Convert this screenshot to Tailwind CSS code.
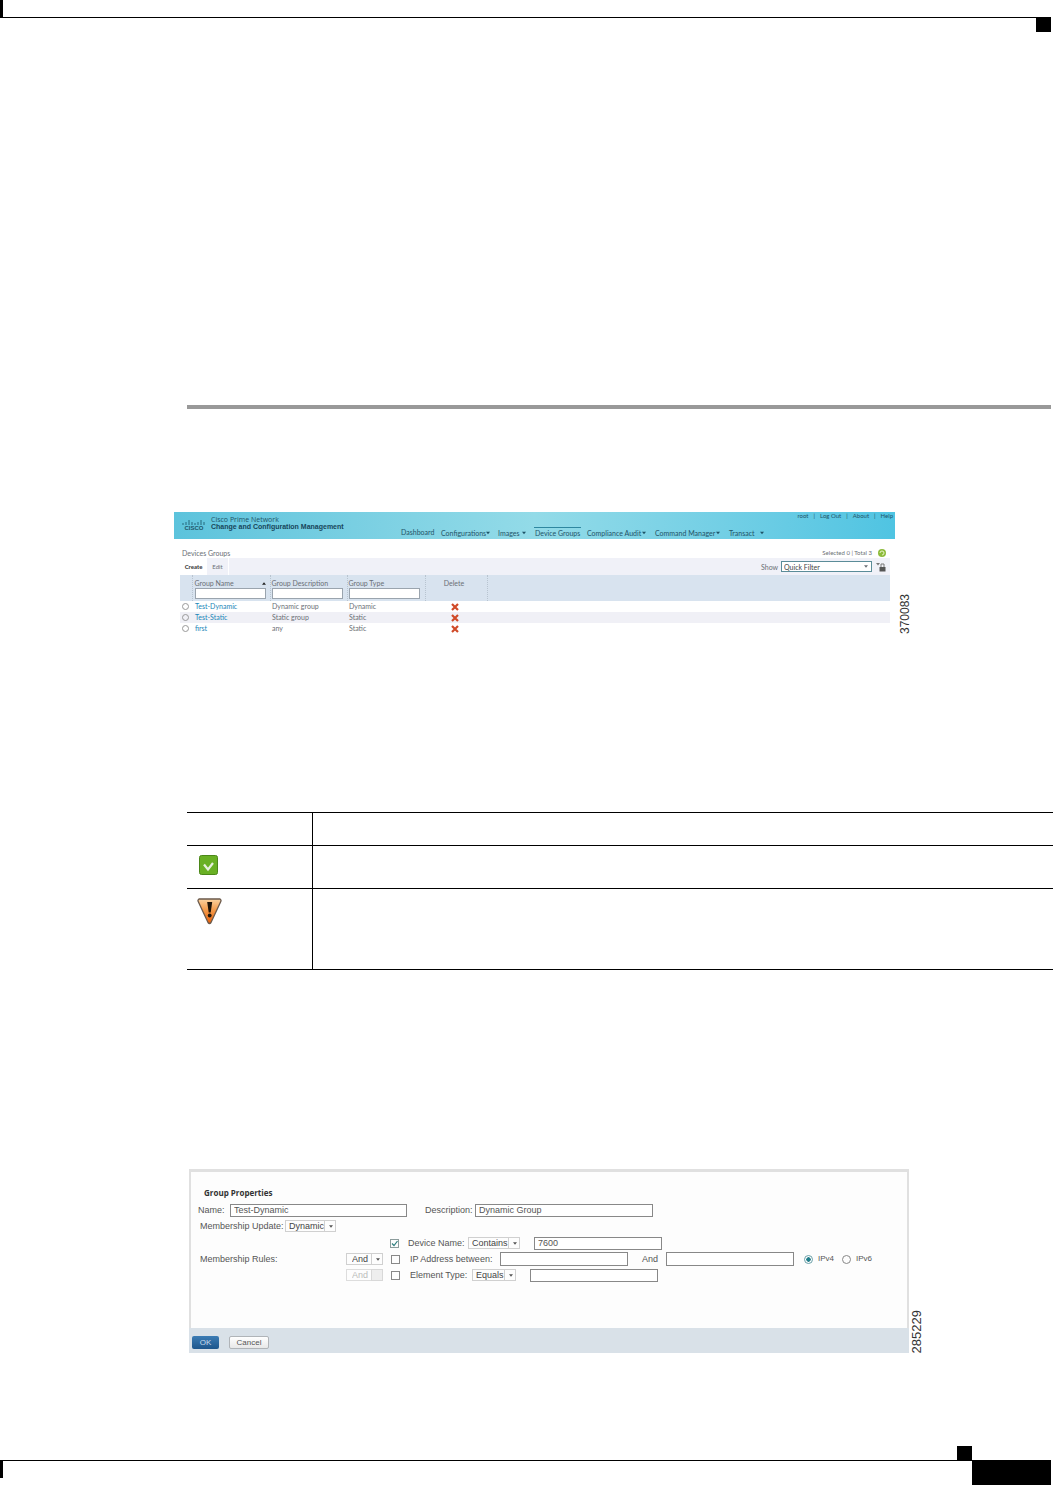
<!DOCTYPE html>
<html lang="en">
<head>
<meta charset="utf-8">
<title>Device Groups</title>
<script src="https://cdn.jsdelivr.net/npm/@tailwindcss/browser@4"></script>
</head>
<body class="bg-white font-['Liberation_Sans',sans-serif]">
<svg class="hidden">
  <symbol id="caret" viewBox="0 0 6 4"><path d="M0 0h6L3 4z" fill="currentColor"/></symbol>
  <symbol id="cross" viewBox="0 0 8 8"><path d="M1 1l6 6M7 1L1 7" stroke="#d04a28" stroke-width="2.2" fill="none"/></symbol>
</svg>
<div class="flex min-h-screen flex-col">
  <header class="mr-0.5 flex h-8 flex-col">
    <div class="h-[17px] w-[3px] bg-black"></div>
    <div class="h-px bg-black"></div>
    <div class="h-3.5 w-[15px] self-end bg-black"></div>
  </header>

  <main class="flex flex-1 flex-col">
    <hr class="mt-[373px] mr-0.5 ml-[187px] h-1 border-0 bg-[#999999]">

    <figure class="mt-[103px] ml-[174px] flex items-end gap-1">
      <div class="w-full max-w-[721px] font-['Lato',sans-serif] text-[7px] leading-[10px] text-[#6b6f76]">
        <div class="flex h-[27px] justify-between bg-linear-to-r from-[#5cc3dc] via-[#93dbe8] to-[#4fc4e2] text-[#1f5468]">
          <div class="flex gap-[5px] pt-1 pl-2">
            <div class="flex w-6 flex-col items-center pt-1">
              <svg class="h-[5px] w-6" viewBox="0 0 24 5" fill="none" stroke="#24687c"><path d="M1 3v2M4 2v3M7 0v5M10 2v3M13 3v2M16 2v3M19 0v5M22 2v3"/></svg>
              <span class="font-['Liberation_Sans',sans-serif] text-[6px] leading-[6px] font-bold">CISCO</span>
            </div>
            <div class="leading-[8px]">
              <div class="font-['Open_Sans',sans-serif] leading-[7px]">Cisco Prime Network</div>
              <h1 class="font-['Liberation_Sans',sans-serif] font-bold text-[#17465a]">Change and Configuration Management</h1>
            </div>
          </div>
          <div class="flex flex-col justify-between">
            <div class="flex justify-end gap-[5px] pr-0.5 text-[6px] leading-[8px]">
              <a href="#">root</a><span>|</span><a href="#">Log Out</a><span>|</span><a href="#">About</a><span>|</span><a href="#">Help</a>
            </div>
            <nav class="flex pb-px whitespace-nowrap">
              <a href="#" class="w-10">Dashboard</a>
              <a href="#" class="flex w-[57px] items-center justify-between pr-[9px]">Configurations<svg class="h-1 w-1 shrink-0"><use href="#caret"/></svg></a>
              <a href="#" class="flex w-[36px] items-center justify-between pr-2">Images<svg class="h-1 w-1 shrink-0"><use href="#caret"/></svg></a>
              <a href="#" class="mr-1.5 w-[47px] border-t border-[#2e87a0] pl-px">Device Groups</a>
              <a href="#" class="flex w-[68px] items-center justify-between pr-[9px]">Compliance Audit<svg class="h-1 w-1 shrink-0"><use href="#caret"/></svg></a>
              <a href="#" class="flex w-[74px] items-center justify-between pr-[9px]">Command Manager<svg class="h-1 w-1 shrink-0"><use href="#caret"/></svg></a>
              <a href="#" class="mr-[131px] flex w-[35px] items-center justify-between">Transact<svg class="h-1 w-1 shrink-0"><use href="#caret"/></svg></a>
            </nav>
          </div>
        </div>

        <div class="mr-[5px] ml-1.5">
          <div class="flex h-[19px] items-end justify-between pl-0.5">
            <h2 class="text-[7px]">Devices Groups</h2>
            <div class="flex items-center gap-1.5 pr-1 text-[6px]">
              <span>Selected 0 | Total 3</span>
              <svg class="h-2 w-2" viewBox="0 0 8 8"><circle cx="4" cy="4" r="4" fill="#8dbb3c"/><path d="M2 4a2 2 0 1 1 2 2" fill="none" stroke="#e8f4c8"/></svg>
            </div>
          </div>
          <div class="flex h-[17px] items-center bg-[#f0f1f8]">
            <button class="h-full w-[27px] bg-white text-[6px] font-bold text-[#333333]">Create</button>
            <button class="h-full w-[22px] border-r border-white text-[6px]">Edit</button>
            <label for="show" class="ml-auto w-5">Show</label>
            <div class="relative">
              <select id="show" class="h-[11px] w-[91px] appearance-none border border-[#5b8c98] bg-white pl-0.5 text-[7px] leading-[8px] text-[#444444]"><option>Quick Filter</option></select>
              <svg class="absolute top-1 right-1 h-[3px] w-1"><use href="#caret"/></svg>
            </div>
            <svg class="mx-1 h-2.5 w-2.5" viewBox="0 0 10 10"><path d="M0 1h4L2 3.500z" fill="#777777"/><path d="M5 5V2h3v3" fill="none" stroke="#777777"/><path d="M3.500 5h6v4.500h-6z" fill="#555555"/></svg>
          </div>
          <table class="w-full table-fixed text-left">
            <colgroup><col class="w-3"><col class="w-[78px]"><col class="w-[77px]"><col class="w-[78px]"><col class="w-[62px]"><col></colgroup>
            <thead class="bg-[#d8e3ef] align-top leading-[8px]">
              <tr class="h-[26px]">
                <th class="border-r border-dotted border-[#b8c4d0]"></th>
                <th class="border-r border-dotted border-[#b8c4d0] pt-1 pl-0.5 font-normal"><div class="flex items-center justify-between pr-1"><label for="fn">Group Name</label><svg class="h-[3px] w-1 rotate-180 text-[#222222]"><use href="#caret"/></svg></div><input id="fn" class="mt-px block h-[11px] w-[71px] border border-[#9aa4ae] bg-white"></th>
                <th class="border-r border-dotted border-[#b8c4d0] pt-1 pl-px font-normal"><label class="block" for="fd">Group Description</label><input id="fd" class="mt-px block h-[11px] w-[71px] border border-[#9aa4ae] bg-white"></th>
                <th class="border-r border-dotted border-[#b8c4d0] pt-1 pl-px font-normal"><label class="block" for="ft">Group Type</label><input id="ft" class="mt-px block h-[11px] w-[71px] border border-[#9aa4ae] bg-white"></th>
                <th class="border-r border-dotted border-[#b8c4d0] pt-1 pr-1 text-center font-normal">Delete</th>
                <th></th>
              </tr>
            </thead>
            <tbody class="leading-[9px]">
              <tr class="h-[11px]">
                <td><input type="radio" name="row" aria-label="Test-Dynamic" class="ml-0.5 block size-[7px] appearance-none rounded-full border border-[#999999]"></td>
                <td class="pl-[3px]"><a href="#" class="text-[#1a86b8]">Test-Dynamic</a></td><td class="pl-0.5">Dynamic group</td><td class="pl-0.5">Dynamic</td>
                <td class="pr-0.5"><button aria-label="Delete" class="mx-auto block"><svg class="size-2"><use href="#cross"/></svg></button></td><td></td>
              </tr>
              <tr class="h-[11px] bg-[#f0f0f6]">
                <td><input type="radio" name="row" aria-label="Test-Static" class="ml-0.5 block size-[7px] appearance-none rounded-full border border-[#999999]"></td>
                <td class="pl-[3px]"><a href="#" class="text-[#1a86b8]">Test-Static</a></td><td class="pl-0.5">Static group</td><td class="pl-0.5">Static</td>
                <td class="pr-0.5"><button aria-label="Delete" class="mx-auto block"><svg class="size-2"><use href="#cross"/></svg></button></td><td></td>
              </tr>
              <tr class="h-[11px]">
                <td><input type="radio" name="row" aria-label="first" class="ml-0.5 block size-[7px] appearance-none rounded-full border border-[#999999]"></td>
                <td class="pl-[3px]"><a href="#" class="text-[#1a86b8]">first</a></td><td class="pl-0.5">any</td><td class="pl-0.5">Static</td>
                <td class="pr-0.5"><button aria-label="Delete" class="mx-auto block"><svg class="size-2"><use href="#cross"/></svg></button></td><td></td>
              </tr>
            </tbody>
          </table>
        </div>
      </div>
      <figcaption class="rotate-180 text-[12px] leading-[12px] text-[#333333] [writing-mode:vertical-rl]">370083</figcaption>
    </figure>

    <div class="mt-[178px] pl-[187px]">
      <table class="w-full table-fixed border-collapse border-y border-black">
        <colgroup><col class="w-[125px]"><col></colgroup>
        <thead><tr class="h-[33px] border-b border-black"><th class="border-r border-black"></th><th></th></tr></thead>
        <tbody class="align-top">
          <tr class="h-[43px] border-b border-black">
            <td class="border-r border-black pt-[9px] pl-3"><svg class="h-5 w-[19px]" viewBox="0 0 19 20" role="img" aria-label="Success"><rect x=".5" y=".5" width="18" height="19" rx="2" fill="#69b023" stroke="#4b8718"/><path d="M5 9.500l4 5L14 8" fill="none" stroke="#e6efdc" stroke-width="2.200"/></svg></td><td></td>
          </tr>
          <tr class="h-[81px]">
            <td class="border-r border-black pt-[9px] pl-2.5"><svg class="h-[27px] w-[25px]" viewBox="0 0 25 27" role="img" aria-label="Warning"><defs><linearGradient id="warn" x2="0" y2="1"><stop offset="0" stop-color="#fbd3a0"/><stop offset=".45" stop-color="#f39a4a"/><stop offset="1" stop-color="#ea5f08"/></linearGradient></defs><path d="M2 1h21q1.500 1 .8 2.500L14 24.500q-1.500 2-3 0L1.200 3.500Q.5 2 2 1z" fill="url(#warn)" stroke="#6b5a4c" stroke-width="1.300"/><path d="M10.200 4h5l-1.500 10.500h-2z" fill="#1f1408"/><circle cx="12.700" cy="17.500" r="1.900" fill="#1f1408"/></svg></td><td></td>
          </tr>
        </tbody>
      </table>
    </div>

    <figure class="mt-[199px] ml-[189px] flex items-end gap-0.5">
      <form class="w-full max-w-[720px] border-x-2 border-t-3 border-[#e0e0e0] bg-[#fdfdfd] text-[9px] leading-[12px] text-[#555555]">
        <div class="flex h-[156px] flex-col whitespace-nowrap">
          <h2 class="mt-[15px] mb-[3px] pl-[13px] font-['Open_Sans',sans-serif] text-[8px] font-bold text-[#333333]">Group Properties</h2>
          <div class="flex h-4 items-center pl-[7px]">
            <label for="name" class="w-8">Name:</label>
            <input id="name" value="Test-Dynamic" class="h-[13px] w-[177px] border border-[#888888] bg-white px-[3px]">
            <label for="desc" class="ml-[18px] w-[50px]">Description:</label>
            <input id="desc" value="Dynamic Group" class="h-[13px] w-[178px] border border-[#888888] bg-white px-[3px]">
          </div>
          <div class="flex h-4 items-center pl-[9px]">
            <label for="update" class="w-[85px]">Membership Update:</label>
            <div class="relative flex"><select id="update" class="h-3 w-[51px] appearance-none border border-[#d0d0d0] pl-[3px] leading-[10px] text-[#444444]"><option>Dynamic</option></select><span class="pointer-events-none absolute inset-y-0 right-0 flex w-3 items-center justify-center border-l border-[#d0d0d0]"><svg class="h-[3px] w-1"><use href="#caret"/></svg></span></div>
          </div>
          <div class="mt-px flex h-4 items-center pl-[199px]">
            <div class="relative flex"><input id="c1" type="checkbox" checked class="peer size-[9px] appearance-none border border-[#8c9c9c]"><svg class="pointer-events-none absolute inset-0 hidden size-[9px] peer-checked:block" viewBox="0 0 9 9"><path d="M2 4.500l2 2L7.500 2" fill="none" stroke="#2f7f7f" stroke-width="1.200"/></svg></div>
            <label for="c1" class="ml-[9px] w-[60px]">Device Name:</label>
            <div class="relative flex"><select aria-label="Device name match" class="h-3 w-[52px] appearance-none border border-[#d0d0d0] pl-[3px] leading-[10px] text-[#444444]"><option>Contains</option></select><span class="pointer-events-none absolute inset-y-0 right-0 flex w-3 items-center justify-center border-l border-[#d0d0d0]"><svg class="h-[3px] w-1"><use href="#caret"/></svg></span></div>
            <input aria-label="Device name" value="7600" class="ml-3.5 h-[13px] w-32 border border-[#888888] bg-white px-[3px]">
          </div>
          <div class="flex h-4 items-center pl-[9px]">
            <span class="w-[146px]">Membership Rules:</span>
            <div class="relative flex"><select aria-label="Join address rule" class="h-3 w-[37px] appearance-none border border-[#d0d0d0] pl-[5px] leading-[10px] text-[#444444]"><option>And</option></select><span class="pointer-events-none absolute inset-y-0 right-0 flex w-3 items-center justify-center border-l border-[#d0d0d0]"><svg class="h-[3px] w-1"><use href="#caret"/></svg></span></div>
            <input id="c2" type="checkbox" class="ml-2 size-[9px] appearance-none border border-[#888888]">
            <label for="c2" class="ml-[10px] w-[90px]">IP Address between:</label>
            <input aria-label="From address" class="h-[14px] w-32 border border-[#888888] bg-white px-[3px]">
            <span class="ml-3.5 w-6">And</span>
            <input aria-label="To address" class="h-[14px] w-32 border border-[#888888] bg-white px-[3px]">
            <input id="v4" type="radio" name="ip" checked class="ml-2.5 size-[9px] appearance-none rounded-full border border-[#6aa0a8] bg-radial from-[#1f7f8c] from-40% to-white to-50%">
            <label for="v4" class="ml-[5px] w-6 text-[8px]">IPv4</label>
            <input id="v6" type="radio" name="ip" class="size-[9px] appearance-none rounded-full border border-[#888888]">
            <label for="v6" class="ml-[5px] text-[8px]">IPv6</label>
          </div>
          <div class="flex h-4 items-center pl-[155px]">
            <div class="relative flex"><select disabled aria-label="Join type rule" class="h-3 w-[37px] appearance-none border border-[#dddddd] pl-[5px] leading-[10px] text-[#bbbbbb]"><option>And</option></select><span class="pointer-events-none absolute inset-y-0 right-0 w-3 border border-[#d8d8d8] bg-[#eeeeee]"></span></div>
            <input id="c3" type="checkbox" class="ml-2 size-[9px] appearance-none border border-[#888888]">
            <label for="c3" class="ml-[10px] w-[62px]">Element Type:</label>
            <div class="relative flex"><select aria-label="Element type match" class="h-3 w-[44px] appearance-none border border-[#d0d0d0] pl-[3px] leading-[10px] text-[#444444]"><option>Equals</option></select><span class="pointer-events-none absolute inset-y-0 right-0 flex w-3 items-center justify-center border-l border-[#d0d0d0]"><svg class="h-[3px] w-1"><use href="#caret"/></svg></span></div>
            <input aria-label="Element type" class="ml-3.5 h-[13px] w-32 border border-[#888888] bg-white px-[3px]">
          </div>
        </div>
        <div class="-mx-0.5 flex h-[25px] items-center gap-2.5 bg-[#d9e1e8] pt-1 pl-[3px] text-[8px]">
          <button type="button" class="h-[13px] w-[27px] rounded-xs bg-linear-to-b from-[#3c7cb4] to-[#1e568c] leading-[12px] text-[#c8dcee]">OK</button>
          <button type="button" class="h-[13px] w-10 rounded-xs border border-[#b0b4b8] bg-linear-to-b from-white to-[#e8e8e8] leading-[10px]">Cancel</button>
        </div>
      </form>
      <figcaption class="rotate-180 text-[13px] leading-[12px] text-[#333333] [writing-mode:vertical-rl]">285229</figcaption>
    </figure>
  </main>

  <footer class="mr-0.5 flex flex-col">
    <div class="mr-[79px] h-3.5 w-[15px] self-end bg-black"></div>
    <div class="h-px bg-black"></div>
    <div class="flex h-6 justify-between">
      <div class="h-[17px] w-[3px] bg-black"></div>
      <div class="w-[79px] bg-black"></div>
    </div>
  </footer>
</div>
</body>
</html>
